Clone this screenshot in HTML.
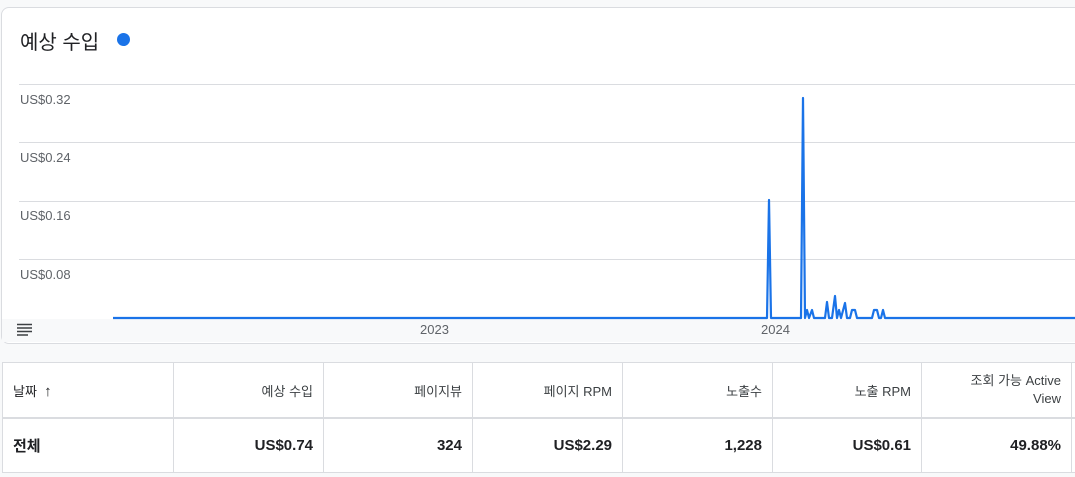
<!DOCTYPE html><html><head><meta charset="utf-8"><style>
body{margin:0;width:1075px;height:477px;background:#f8f9fa;font-family:"Liberation Sans","Noto Sans CJK KR",sans-serif;overflow:hidden;position:relative}
.card{position:absolute;left:1px;top:7px;width:1090px;height:335px;background:#fff;border:1px solid #dadce0;border-radius:8px;overflow:hidden}
.title{position:absolute;left:20px;top:26px;font-size:20px;color:#202124}
.dot{position:absolute;left:117px;top:33px;width:13px;height:13px;border-radius:50%;background:#1a73e8}
.g{position:absolute;left:19px;width:1070px;height:1px;background:#dadce0}
.lab{position:absolute;left:20px;font-size:13px;color:#5f6368}
.foot{position:absolute;left:2px;top:319px;width:1090px;height:23px;background:#f8f9fa}
.yr{position:absolute;top:322px;font-size:13px;color:#5f6368}
table{position:absolute;left:2px;top:362px;border-collapse:collapse;background:#fff;table-layout:fixed;width:1220px}
td{border:1px solid #dadce0;padding:0 10px;text-align:right;font-size:13px;color:#3c4043;overflow:hidden}
tr.h td{height:54px}
tr.b td{height:53px;font-weight:bold;font-size:15px;color:#202124}
tr.h{border-bottom:2px solid #dadce0}
</style></head><body>
<div class="card"></div>
<div class="title">예상 수입</div><div class="dot"></div>
<div class="g" style="top:84px"></div><div class="g" style="top:142px"></div><div class="g" style="top:201px"></div><div class="g" style="top:259px"></div>
<div class="lab" style="top:92px">US$0.32</div><div class="lab" style="top:150px">US$0.24</div><div class="lab" style="top:208px">US$0.16</div><div class="lab" style="top:267px">US$0.08</div>
<div class="foot"></div>
<svg style="position:absolute;left:17px;top:323px" width="16" height="14"><path d="M0 1.5h15M0 5h15M0 8.5h15M0 12h11" stroke="#3c4043" stroke-width="1.6"/></svg>
<div class="yr" style="left:420px">2023</div><div class="yr" style="left:761px">2024</div>
<svg style="position:absolute;left:0;top:0" width="1075" height="330"><path d="M113 318H767L769 200L771 318H801L803 98L805 318L807 310L809 318L812 310L814 318H825L827 302L829 318L832 318L835 296L837 318L839 310L841 318L845 303L847 318L850 318L852 310L855 310L857 318H872L874 310L877 310L879 318H881L883 310L885 318H1075" fill="none" stroke="#1a73e8" stroke-width="2.2" stroke-linejoin="round"/></svg>
<table>
<colgroup><col style="width:171px"><col style="width:150px"><col style="width:149px"><col style="width:150px"><col style="width:150px"><col style="width:149px"><col style="width:150px"><col style="width:151px"></colgroup>
<tr class="h"><td style="text-align:left;color:#202124">날짜 &nbsp;<span style="font-size:15px">↑</span></td><td>예상 수입</td><td>페이지뷰</td><td>페이지 RPM</td><td>노출수</td><td>노출 RPM</td><td style="line-height:18px">조회 가능 Active<br>View</td><td></td></tr>
<tr class="b"><td style="text-align:left">전체</td><td>US$0.74</td><td>324</td><td>US$2.29</td><td>1,228</td><td>US$0.61</td><td>49.88%</td><td></td></tr>
</table>
</body></html>
